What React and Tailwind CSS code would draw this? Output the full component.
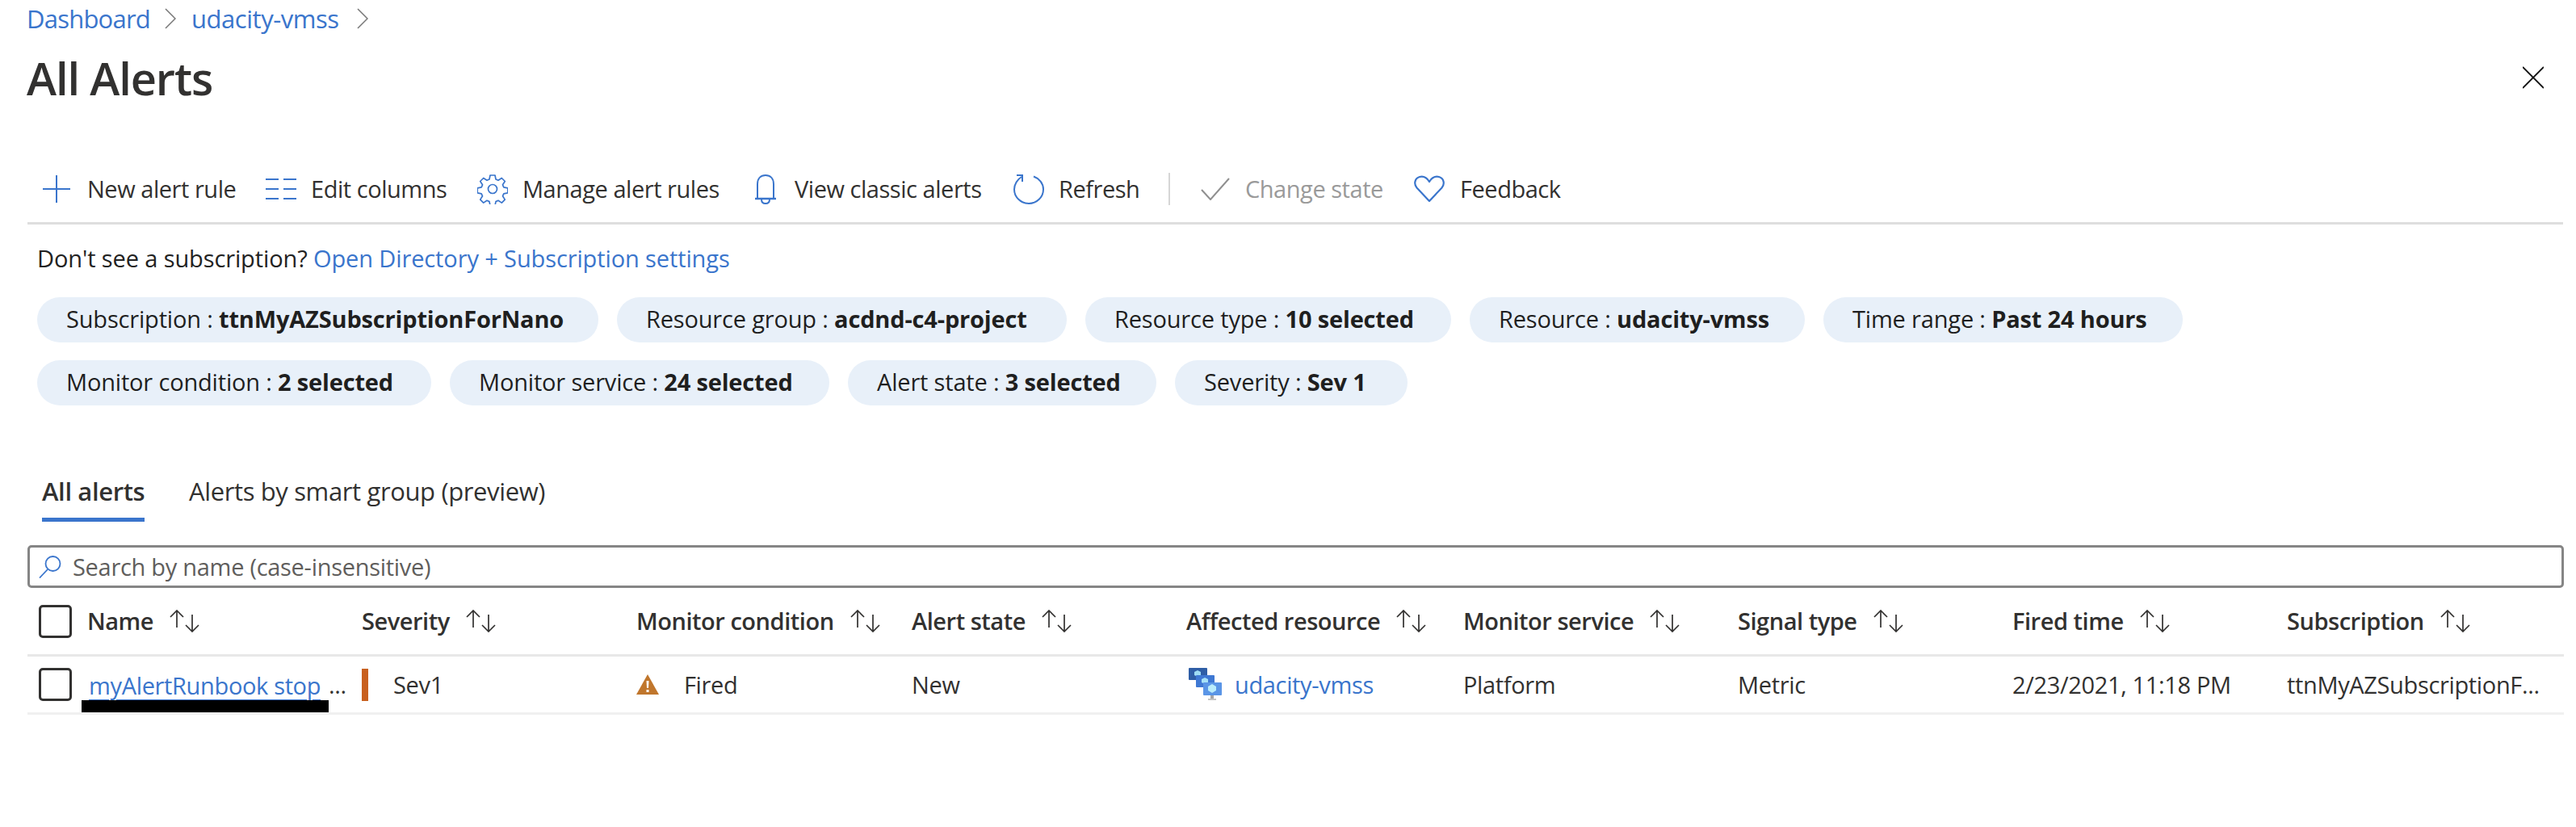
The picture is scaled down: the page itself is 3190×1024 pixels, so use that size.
const blue = '#3a75cc';

function PlusIcon() {
  return <svg width="36" height="36" viewBox="0 0 36 36" className="shrink-0"><path d="M18 1v34M1 18h34" stroke={blue} strokeWidth="2" fill="none" /></svg>;
}
function ColumnsIcon() {
  return <svg width="38" height="28" viewBox="0 0 38 28" className="shrink-0"><path d="M0 2h16M22 2h16M0 14h16M22 14h16M0 26h16M22 26h16" stroke={blue} strokeWidth="2" fill="none" /></svg>;
}
function GearIcon() {
  return (
    <svg width="38" height="38" viewBox="0 0 38 38" className="shrink-0" fill="none" stroke={blue} strokeWidth="1.7" strokeLinejoin="round">
      <path d="M16 2h6l1 5 3 1.300 4.300-2.800 4 4-2.800 4.300 1.300 3 5 1v6l-5 1-1.300 3 2.800 4.300-4 4-4.300-2.800-3 1.300-1 5h-6l-1-5-3-1.300-4.300 2.800-4-4 2.800-4.300-1.300-3-5-1v-6l5-1 1.300-3-2.800-4.300 4-4 4.300 2.800 3-1.300z" />
      <circle cx="19" cy="19" r="5.500" />
    </svg>
  );
}
function BellIcon() {
  return (
    <svg width="28" height="38" viewBox="0 0 28 38" className="shrink-0" fill="none" stroke={blue} strokeWidth="2">
      <path d="M4 30V13C4 6 8 2 14 2s10 4 10 11v17" />
      <path d="M1 31h26" strokeWidth="2.500" />
      <path d="M9 32c0 3 2 5 5 5s5-2 5-5" />
    </svg>
  );
}
function RefreshIcon() {
  return (
    <svg width="38" height="38" viewBox="0 0 38 38" className="shrink-0" fill="none" stroke={blue} strokeWidth="2">
      <path d="M25 3.500C32 6 37 12 37 19.500 37 29 29 37 19 37S1 29 1 19.500C1 13 5 7 10 4" />
      <path d="M4 2h7v8" />
    </svg>
  );
}
function CheckIcon() {
  return <svg width="36" height="28" viewBox="0 0 36 28" className="shrink-0" fill="none" stroke="#8f8f8f" strokeWidth="2"><path d="M1 15l11 12L35 1" /></svg>;
}
function HeartIcon() {
  return <svg width="38" height="34" viewBox="0 0 38 34" className="shrink-0" fill="none" stroke={blue} strokeWidth="2.200" strokeLinejoin="round"><path d="M19 32L3.500 15.500C-.5 11 1 3.500 7 2c5-1.200 9 1 12 6 3-5 7-7.200 12-6 6 1.500 7.500 9 3.500 13.500z" /></svg>;
}
function CloseIcon() {
  return <svg width="26" height="28" viewBox="0 0 26 28" className="shrink-0" fill="none" stroke="#111" strokeWidth="1.800"><path d="M0 1l26 26M26 1L0 27" /></svg>;
}
function SearchIcon() {
  return <svg width="28" height="28" viewBox="0 0 28 28" className="shrink-0" fill="none" stroke={blue} strokeWidth="1.800"><circle cx="17.500" cy="10" r="9" /><path d="M11 17L1 27.500" /></svg>;
}
function SortIcon() {
  return <svg width="37" height="28" viewBox="0 0 37 28" className="shrink-0" fill="none" stroke="#323130" strokeWidth="1.700"><path d="M9 1v21M1 9l8-8 8 8M28 6v21M20 19l8 8 8-8" /></svg>;
}
function WarningIcon() {
  return (
    <svg width="28" height="25" viewBox="0 0 28 25" className="shrink-0">
      <path d="M14 0L28 25H0z" fill="#c0762c" />
      <path d="M12.500 8h3l-.5 9h-2zM12.500 19h3v3h-3z" fill="#fff" />
    </svg>
  );
}
function VmssIcon() {
  return (
    <svg width="42" height="42" viewBox="0 0 42 42" className="shrink-0">
      <rect x="0" y="0" width="23" height="15" rx="1" fill="#2f5ea6" />
      <path d="M11 3l4 2v4l-4 2-4-2V5z" fill="#9fdcf3" />
      <rect x="9" y="9" width="23" height="15" rx="1" fill="#3f78d3" />
      <path d="M20 12l4 2v4l-4 2-4-2v-4z" fill="#a7e2f7" />
      <rect x="18" y="18" width="23" height="16" rx="1" fill="#5a95e6" />
      <path d="M29 20l5 3v5l-5 3-5-3v-5z" fill="#b9ecfb" />
      <path d="M27 34h4v4h-4z" fill="#a6a6a6" />
      <path d="M24 38h10v2H24z" fill="#c4c4c4" />
    </svg>
  );
}

const tools = [
  { icon: <PlusIcon />, label: 'New alert rule', box: 'w-[36px] ml-[52px] mr-[20px]', text: 'w-[185px] text-[#323130]' },
  { icon: <ColumnsIcon />, label: 'Edit columns', box: 'w-[38px] ml-[36px] mr-[18px]', text: 'w-[169px] text-[#323130]' },
  { icon: <GearIcon />, label: 'Manage alert rules', box: 'w-[38px] ml-[37px] mr-[18px]', text: 'w-[245px] text-[#323130]' },
  { icon: <BellIcon />, label: 'View classic alerts', box: 'w-[28px] ml-[42px] mr-[22px]', text: 'w-[235px] text-[#323130]' },
  { icon: <RefreshIcon />, label: 'Refresh', box: 'w-[38px] ml-[36px] mr-[18px]', text: 'w-[98px] text-[#323130]' },
];

const pillsA = [
  ['Subscription', 'ttnMyAZSubscriptionForNano', 'w-[695px]'],
  ['Resource group', 'acdnd-c4-project', 'w-[557px]'],
  ['Resource type', '10 selected', 'w-[453px]'],
  ['Resource', 'udacity-vmss', 'w-[415px]'],
  ['Time range', 'Past 24 hours', 'w-[445px]'],
];
const pillsB = [
  ['Monitor condition', '2 selected', 'w-[488px]'],
  ['Monitor service', '24 selected', 'w-[470px]'],
  ['Alert state', '3 selected', 'w-[382px]'],
  ['Severity', 'Sev 1', 'w-[288px]'],
];

function Pill({ data }) {
  return (
    <div className={`${data[2]} h-[56px] rounded-[28px] bg-[#e8f0f9] pl-[36px] pb-[2px] flex items-center text-[#1f1f1f] whitespace-nowrap tracking-[-0.006em]`}>
      <span>{data[0]} :&nbsp;</span><span className="font-bold">{data[1]}</span>
    </div>
  );
}

const heads = ['Severity', 'Monitor condition', 'Alert state', 'Affected resource', 'Monitor service', 'Signal type', 'Fired time', 'Subscription'];

function Head({ label }) {
  return (
    <div className="flex items-center gap-[20px] font-semibold text-[#323130]">
      <span>{label}</span><SortIcon />
    </div>
  );
}

const gridCols = 'grid grid-cols-[414px_340px_341px_340px_343px_340px_340px_340px_342px]';

export default function App() {
  return (
    <div className="relative w-[3190px] h-[1024px] bg-white overflow-hidden text-[29px] leading-[36px] tracking-[-0.016em] text-[#323130] font-['Open_Sans',sans-serif]">
      <div className="h-[46px] pl-[33px] flex items-center" style={{ color: blue }}>
        <span className="w-[153px] text-[31px] tracking-[-0.025em]">Dashboard</span>
        <svg width="14" height="26" viewBox="0 0 14 26" className="ml-[18px] mr-[20px]" fill="none" stroke="#777" strokeWidth="1.500"><path d="M1 1l12 12L1 25" /></svg>
        <span className="w-[184px] -ml-[1px] text-[31px] tracking-[-0.015em] whitespace-nowrap">udacity-vmss</span>
        <svg width="14" height="26" viewBox="0 0 14 26" className="ml-[21px]" fill="none" stroke="#777" strokeWidth="1.500"><path d="M1 1l12 12L1 25" /></svg>
      </div>

      <div className="h-[100px] pl-[33px] pr-[40px] flex items-center justify-between">
        <h1 className="text-[56px] leading-[60px] font-semibold tracking-[-0.02em] text-[#323130]">All Alerts</h1>
        <CloseIcon />
      </div>

      <div className="h-[129px] mx-0 flex items-center">
        <div className="h-[58px] mt-[46px] flex items-center">
          {tools.map((t) => (
            <div key={t.label} className="flex items-center">
              <div className={`${t.box} flex justify-center`}>{t.icon}</div>
              <span className={`${t.text} whitespace-nowrap`}>{t.label}</span>
            </div>
          ))}
          <div className="w-[2px] h-[40px] bg-[#d6d6d6] ml-[38px]" />
          <div className="ml-[38px] mr-[19px]"><CheckIcon /></div>
          <span className="w-[172px] text-[#9a9a9a] whitespace-nowrap">Change state</span>
          <div className="ml-[37px] mr-[19px]"><HeartIcon /></div>
          <span className="whitespace-nowrap text-[#323130]">Feedback</span>
        </div>
      </div>

      <div className="h-[3px] ml-[34px] mr-[16px] bg-[#dedede]" />

      <div className="h-[42px] mt-[21px] pl-[46px] flex items-center whitespace-nowrap text-[#222] tracking-[-0.004em]">
        <span>Don't see a subscription?&nbsp;</span>
        <span style={{ color: blue }}>Open Directory + Subscription settings</span>
      </div>

      <div className="mt-[27px] pl-[46px] flex gap-[23px]">
        {pillsA.map((p) => <Pill key={p[0]} data={p} />)}
      </div>
      <div className="mt-[22px] pl-[46px] flex gap-[23px]">
        {pillsB.map((p) => <Pill key={p[0]} data={p} />)}
      </div>

      <div className="mt-[86px] pl-[52px] flex text-[31px] tracking-[-0.012em]">
        <div className="w-[127px]">
          <div className="h-[50px] pb-[10px] font-semibold whitespace-nowrap flex items-center">All alerts</div>
          <div className="h-[5px] mt-[3px] bg-[#3a75cc]" />
        </div>
        <div className="ml-[55px] h-[50px] pb-[10px] flex items-center whitespace-nowrap">Alerts by smart group (preview)</div>
      </div>

      <div className="mt-[29px] ml-[34px] mr-[15px] h-[53px] border-[3px] border-[#858585] rounded-[5px] pl-[11px] flex items-center gap-[14px] text-[#605e5c] tracking-[-0.01em]">
        <SearchIcon />
        <span>Search by name (case-insensitive)</span>
      </div>

      <div className={`${gridCols} ml-[34px] mr-[15px] h-[85px] border-b-[3px] border-[#e8e8e8] items-center`}>
        <div className="flex items-center pl-[14px]">
          <div className="w-[41px] h-[41px] border-[3px] border-[#323130] rounded-[5px] mr-[19px]" />
          <Head label="Name" />
        </div>
        {heads.map((h) => <Head key={h} label={h} />)}
      </div>

      <div className={`${gridCols} ml-[34px] mr-[15px] h-[72px] border-b-[3px] border-[#f0f0f0] items-center whitespace-nowrap tracking-[-0.012em]`}>
        <div className="flex items-center pl-[14px]">
          <div className="w-[41px] h-[41px] border-[3px] border-[#323130] rounded-[5px] mr-[21px] shrink-0" />
          <div className="relative w-[288px] underline decoration-[2px] underline-offset-[6px] mt-[2px]" style={{ color: blue }}>
            myAlertRunbook stop
            <span className="absolute left-[-9px] top-[36px] w-[306px] h-[15px] bg-black" />
          </div>
          <span className="ml-[9px] text-[#323130]">...</span>
        </div>
        <div className="flex items-center">
          <div className="w-[8px] h-[40px] bg-[#c8601f] mr-[31px]" />
          <span>Sev1</span>
        </div>
        <div className="flex items-center gap-[31px]">
          <WarningIcon />
          <span>Fired</span>
        </div>
        <div>New</div>
        <div className="flex items-center gap-[15px] pl-[3px]">
          <VmssIcon />
          <span style={{ color: blue }}>udacity-vmss</span>
        </div>
        <div>Platform</div>
        <div>Metric</div>
        <div>2/23/2021, 11:18 PM</div>
        <div>ttnMyAZSubscriptionF...</div>
      </div>
    </div>
  );
}
